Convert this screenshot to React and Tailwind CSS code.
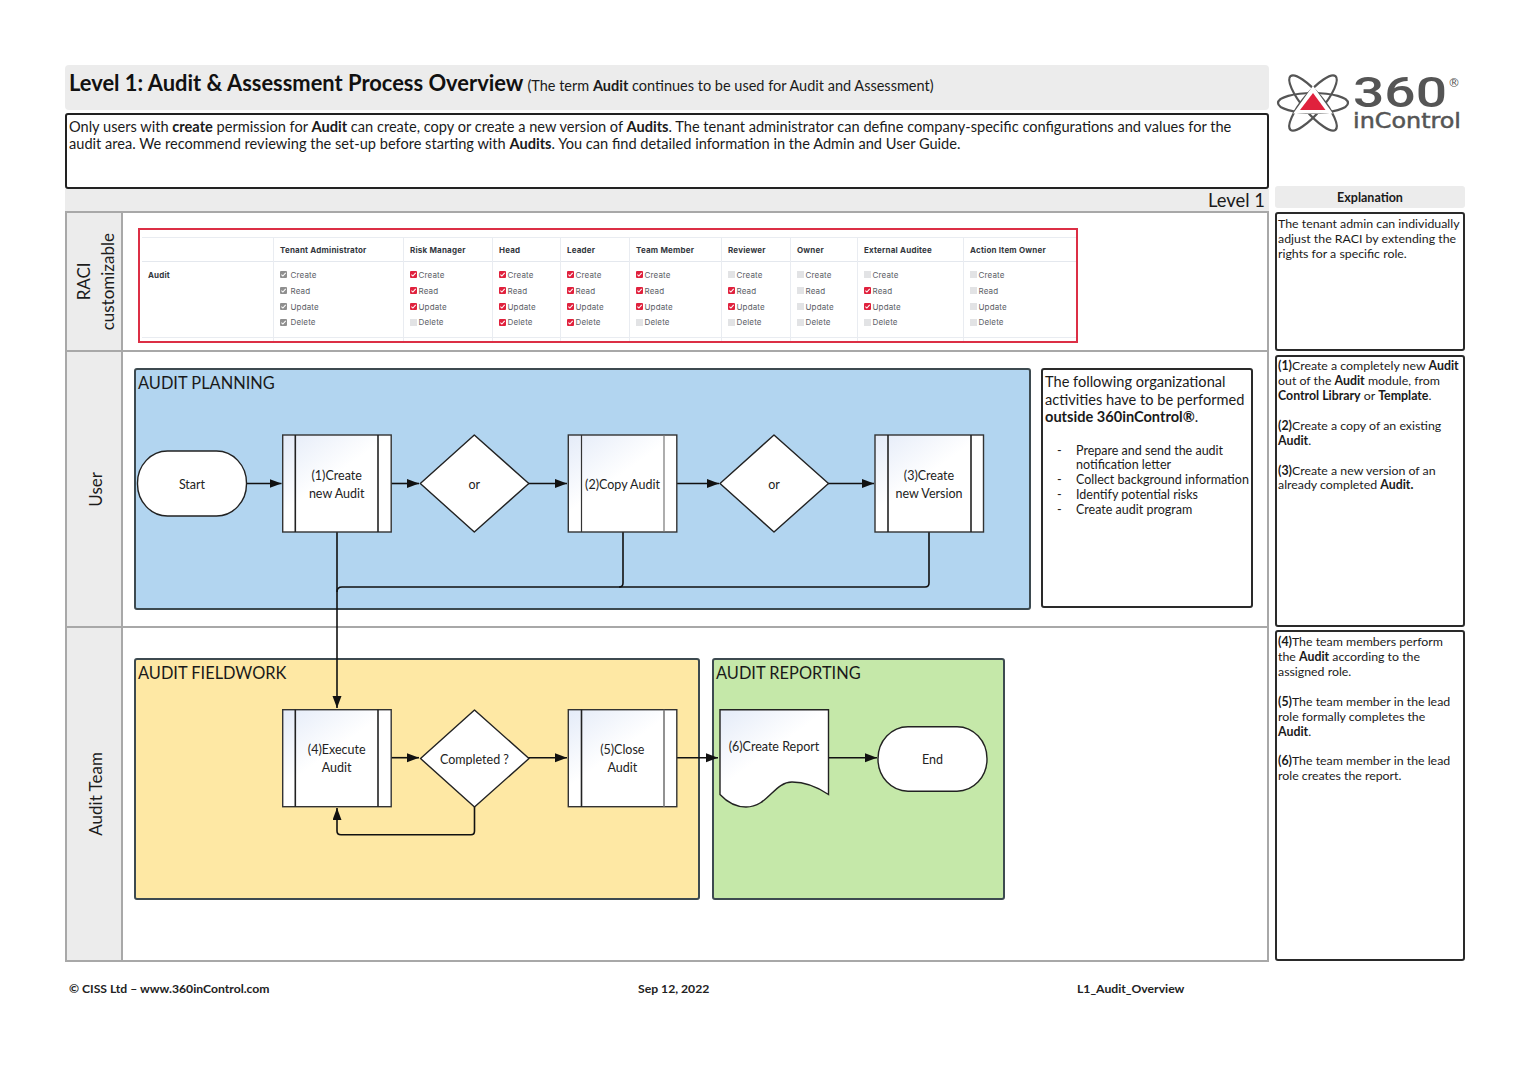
import React from "react";

const roles = [
  { name: "", w: "", cells: null },
  { name: "Tenant Administrator", cells: "gggg", gap: "gap-[3.5px]" },
  { name: "Risk Manager", cells: "rrru" },
  { name: "Head", cells: "rrrr" },
  { name: "Leader", cells: "rrrr" },
  { name: "Team Member", cells: "rrru" },
  { name: "Reviewer", cells: "urru" },
  { name: "Owner", cells: "uuuu" },
  { name: "External Auditee", cells: "urru" },
  { name: "Action Item Owner", cells: "uuuu" },
];
const perms = ["Create", "Read", "Update", "Delete"];

function Box({ kind }) {
  if (kind === "u") return <span className="w-[7px] h-[7px] shrink-0 bg-[#e2e3e5]" />;
  return (
    <span className={`w-[7px] h-[7px] shrink-0 flex items-center justify-center rounded-[1px] ${kind === "r" ? "bg-[#e0213d]" : "bg-[#8f8f8f]"}`}>
      <svg viewBox="0 0 8 8" className="w-[7px] h-[7px]">
        <path d="M1.6 4.2 L3.3 5.8 L6.5 2.2" fill="none" stroke="#fff" strokeWidth="1.2" />
      </svg>
    </span>
  );
}

function RaciTable() {
  return (
    <div className="w-[940px] h-[115px] border-2 border-[#dc2f45] pl-[2px] pt-[7px] bg-white font-['Inter',sans-serif]">
      <div className="grid grid-cols-[131px_130px_89px_68px_69px_92px_69px_67px_106px_113px] h-[104px] border-t border-[#e9ecf1]">
        {roles.map((r, i) => (
          <div key={i} className={`flex flex-col ${i > 0 ? "border-l border-[#e9ecf1]" : ""}`}>
            <div className="h-[24px] border-b border-[#e4e8ee] pl-[6px] flex items-center text-[8px] font-bold tracking-[0.2px] text-[#33373d] whitespace-nowrap">
              {r.name}
            </div>
            <div className="h-[76px] border-b border-[#e9ecf1] pt-[5px] pl-[6px] text-[8px] tracking-[0.15px] text-[#5c6066]">
              {r.cells ? (
                perms.map((p, j) => (
                  <div key={p} className={`h-[15.8px] flex items-center leading-[16px] ${r.gap || "gap-[1.5px]"}`}>
                    <Box kind={r.cells[j]} />
                    <span>{p}</span>
                  </div>
                ))
              ) : (
                <div className="leading-[16px] font-bold text-[#33373d]">Audit</div>
              )}
            </div>
          </div>
        ))}
      </div>
    </div>
  );
}

function Lane({ h, children, label, last }) {
  return (
    <div className={`flex ${h} ${last ? "" : "border-b-2 border-[#a8a8a8]"}`}>
      <div className="w-[56px] shrink-0 bg-[#ececec] border-r-2 border-[#a8a8a8] pl-[4px] flex items-center justify-center">
        <div className="[writing-mode:vertical-rl] rotate-180 text-center text-[17px] leading-[24px] text-[#1c1c1c]">{label}</div>
      </div>
      <div className="flex-1 min-w-0">{children}</div>
    </div>
  );
}

function Panel({ title, color, className }) {
  return (
    <div className={`border-2 border-[#3d4a50] rounded-[3px] pl-[2px] pt-[2px] text-[16.4px] leading-[22px] text-[#1a1a1a] ${color} ${className}`}>
      {title}
    </div>
  );
}

function Proc({ x, y, l, r, lines, rc = "#222" }) {
  return (
    <g>
      <rect x={x} y={y} width="108.5" height="97" fill="url(#proc)" stroke="#333" strokeWidth="1.4" />
      <line x1={l} x2={l} y1={y} y2={y + 97} stroke="#222" strokeWidth="1.6" />
      <line x1={r} x2={r} y1={y} y2={y + 97} stroke={rc} strokeWidth="1.6" />
      {lines.map((t, i) => (
        <text key={t} x={x + 54} y={y + 44.500 + i * 18} textAnchor="middle" fontSize="12.5" fill="#222">{t}</text>
      ))}
    </g>
  );
}

function Diamond({ x, y, label }) {
  const cx = x + 54, cy = y + 48.5;
  return (
    <g>
      <polygon points={`${x},${cy} ${cx},${y} ${x + 108.5},${cy} ${cx},${y + 97}`} fill="#fff" stroke="#222" strokeWidth="1.4" strokeLinejoin="round" />
      <text x={cx} y={cy + 5} textAnchor="middle" fontSize="12.5" fill="#222">{label}</text>
    </g>
  );
}

function Term({ x, y, w = 109, h = 65, label }) {
  return (
    <g>
      <rect x={x} y={y} width={w} height={h} rx="30" ry="32" fill="#fff" stroke="#222" strokeWidth="1.4" />
      <text x={x + w / 2} y={y + h / 2 + 5} textAnchor="middle" fontSize="12.5" fill="#222">{label}</text>
    </g>
  );
}

function Flow() {
  const st = { fill: "none", stroke: "#111", strokeWidth: 1.6 };
  return (
    <svg viewBox="65 211 1204 751" className="absolute inset-0 w-full h-full pointer-events-none font-['Lato',sans-serif]">
      <defs>
        <linearGradient id="proc" x1="0" y1="0" x2="0.6" y2="0.75">
          <stop offset="0" stopColor="#e4ebf8" />
          <stop offset="0.65" stopColor="#ffffff" />
        </linearGradient>
        <marker id="ah" markerUnits="userSpaceOnUse" markerWidth="13" markerHeight="10" refX="12" refY="4.5" orient="auto">
          <path d="M0 0 L12 4.5 L0 9 Z" fill="#111" />
        </marker>
      </defs>

      <path d="M337 532 V708" {...st} markerEnd="url(#ah)" />
      <path d="M337 592 Q337 587 342 587 H925 Q929 587 929 583 V532" {...st} />
      <path d="M623 532 V583 Q623 587 619 587" {...st} />
      <path d="M246.500 483.500 H281.500" {...st} markerEnd="url(#ah)" />
      <path d="M391 483.500 H419" {...st} markerEnd="url(#ah)" />
      <path d="M528 483.500 H567" {...st} markerEnd="url(#ah)" />
      <path d="M677 483.500 H719" {...st} markerEnd="url(#ah)" />
      <path d="M828 483.500 H874" {...st} markerEnd="url(#ah)" />
      <path d="M391 757.700 H419" {...st} markerEnd="url(#ah)" />
      <path d="M528 757.700 H567" {...st} markerEnd="url(#ah)" />
      <path d="M677 757.700 H718" {...st} markerEnd="url(#ah)" />
      <path d="M828.500 757.700 H877" {...st} markerEnd="url(#ah)" />
      <path d="M474.500 807 V831 Q474.500 834.700 471 834.700 H341 Q337 834.700 337 831 V808" {...st} markerEnd="url(#ah)" />

      <Term x={137.500} y={451} label="Start" />
      <Proc x={282.700} y={435} l={295.300} r={378} lines={["(1)Create", "new Audit"]} />
      <Diamond x={420.300} y={435} label="or" />
      <g>
        <rect x="568.300" y="435" width="108.500" height="97" fill="url(#proc)" stroke="#333" strokeWidth="1.4" />
        <line x1="581.500" x2="581.500" y1="435" y2="532" stroke="#333" strokeWidth="1.200" />
        <line x1="664" x2="664" y1="435" y2="532" stroke="#777" strokeWidth="1.200" />
        <text x="622.500" y="488.500" textAnchor="middle" fontSize="12.5" fill="#222">(2)Copy Audit</text>
      </g>
      <Diamond x={720} y={435} label="or" />
      <Proc x={875} y={435} l={888} r={971} lines={["(3)Create", "new Version"]} />

      <Proc x={282.700} y={709.700} l={295.300} r={378} lines={["(4)Execute", "Audit"]} />
      <Diamond x={420.500} y={710} label="Completed ?" />
      <Proc x={568.300} y={709.700} l={581.500} r={664} rc="#777" lines={["(5)Close", "Audit"]} />
      <path d="M720 709.700 H828.500 V794.500 C816 786 805 782 792 782 C774 782 768 807 746 807 C735 807 727 802 720 794.500 Z" fill="url(#proc)" stroke="#222" strokeWidth="1.4" />
      <text x="774" y="751" textAnchor="middle" fontSize="12.5" fill="#222">(6)Create Report</text>
      <Term x={878} y={726.700} h={64.500} label="End" />
    </svg>
  );
}

function Logo() {
  return (
    <svg viewBox="0 0 192 66" className="w-[192px] h-[66px] font-['DejaVu_Sans',sans-serif]">
      <g fill="none" stroke="#555" strokeWidth="2.2">
        <ellipse cx="38" cy="34" rx="35" ry="10" />
        <ellipse cx="38" cy="34" rx="35" ry="10" transform="rotate(50 38 34)" />
        <ellipse cx="38" cy="34" rx="35" ry="10" transform="rotate(-50 38 34)" />
      </g>
      <polygon points="38,21 53,42 23,42" fill="#fff" stroke="#fff" strokeWidth="5" />
      <polygon points="38,24 50.500,41 25,41" fill="#e0213d" />
      <text x="78" y="38" fontSize="42" fontWeight="500" fill="#555" textLength="94" lengthAdjust="spacingAndGlyphs" className="font-['Roboto',sans-serif]">360</text>
      <text x="173" y="18" fontSize="12" fill="#555">®</text>
      <text x="78" y="59" fontSize="21" fill="#555" stroke="#555" strokeWidth="0.5" textLength="108" lengthAdjust="spacingAndGlyphs">inControl</text>
    </svg>
  );
}

const B = ({ children }) => <b className="font-bold">{children}</b>;

export default function App() {
  return (
    <div className="w-[1536px] h-[1086px] bg-white pt-[65px] pl-[65px] flex gap-[6px] font-['Lato',sans-serif] text-[#1a1a1a]">
      <div className="w-[1204px] shrink-0 flex flex-col">
        <div className="h-[45px] bg-[#ececec] rounded-[4px] pl-[4px] pt-[3px] flex items-baseline whitespace-nowrap">
          <span className="text-[21.9px] leading-[30px] font-bold text-[#111]">Level 1: Audit &amp; Assessment Process Overview</span>
          <span className="ml-[4px] text-[14.5px]">(The term <B>Audit</B> continues to be used for Audit and Assessment)</span>
        </div>
        <div className="mt-[3px] h-[76px] border-2 border-[#222] rounded-[3px] px-[2px] pt-[3px] text-[14.6px] leading-[17.400px]">
          Only users with <B>create</B> permission for <B>Audit</B> can create, copy or create a new version of <B>Audits</B>. The tenant administrator can define company-specific configurations and values for the audit area. We recommend reviewing the set-up before starting with <B>Audits</B>. You can find detailed information in the Admin and User Guide.
        </div>
        <div className="h-[22px] bg-[#ececec] text-right pr-[4px] text-[18.4px] leading-[22px]">Level 1</div>

        <div className="relative h-[751px]">
          <div className="h-full border-2 border-[#a8a8a8] flex flex-col">
            <Lane h="h-[139px]" label={<>RACI<br />customizable</>}>
              <div className="pl-[15px] pt-[15px]"><RaciTable /></div>
            </Lane>
            <Lane h="h-[276px]" label="User">
              <div className="pl-[11px] pt-[16px] flex">
                <Panel title="AUDIT PLANNING" color="bg-[#b2d5f0]" className="w-[897px] h-[242px]" />
                <div className="ml-[10px] w-[212px] h-[240px] border-2 border-[#2a2a2a] rounded-[3px] bg-white pl-[2px] pt-[3px]">
                  <p className="text-[14.6px] leading-[17.500px]">The following organizational activities have to be performed <B>outside 360inControl®</B>.</p>
                  <ul className="mt-[18px] text-[12.5px] leading-[14.800px]">
                    {[["Prepare and send the audit", "notification letter"], ["Collect background information"], ["Identify potential risks"], ["Create audit program"]].map((it) => (
                      <li key={it[0]} className="flex whitespace-nowrap">
                        <span className="ml-[12px] w-[19px] shrink-0">-</span>
                        <span>{it[0]}{it[1] && <><br />{it[1]}</>}</span>
                      </li>
                    ))}
                  </ul>
                </div>
              </div>
            </Lane>
            <Lane h="flex-1" label="Audit Team" last>
              <div className="pl-[11px] pt-[30px] flex gap-[12px]">
                <Panel title="AUDIT FIELDWORK" color="bg-[#fee8a4]" className="w-[566px] h-[242px]" />
                <Panel title="AUDIT REPORTING" color="bg-[#c5e8a9]" className="w-[293px] h-[242px]" />
              </div>
            </Lane>
          </div>
          <Flow />
        </div>

        <div className="mt-[19px] pl-[4px] grid grid-cols-[569px_439px_1fr] text-[12.2px] leading-[16px] font-bold text-[#222]">
          <span>© CISS Ltd – www.360inControl.com</span>
          <span>Sep 12, 2022</span>
          <span>L1_Audit_Overview</span>
        </div>
      </div>

      <div className="w-[190px] shrink-0 flex flex-col text-[12.35px] leading-[14.900px]">
        <div className="h-[121px] pt-[4px]"><Logo /></div>
        <div className="h-[22px] bg-[#ececec] rounded-[3px] text-center text-[12.500px] leading-[23px] font-bold">Explanation</div>
        <div className="mt-[4px] h-[139px] border-2 border-[#2a2a2a] rounded-[3px] pl-[1px] pt-[3px]">
          The tenant admin can individually adjust the RACI by extending the rights for a specific role.
        </div>
        <div className="mt-[4px] h-[272px] border-2 border-[#2a2a2a] rounded-[3px] pl-[1px] pt-[2px]">
          <p><B>(1)</B>Create a completely new <B>Audit</B> out of the <B>Audit</B> module, from <B>Control Library</B> or <B>Template</B>.</p>
          <p className="mt-[15px]"><B>(2)</B>Create a copy of an existing <B>Audit</B>.</p>
          <p className="mt-[15px]"><B>(3)</B>Create a new version of an already completed <B>Audit.</B></p>
        </div>
        <div className="mt-[3px] h-[331px] border-2 border-[#2a2a2a] rounded-[3px] pl-[1px] pt-[3px]">
          <p><B>(4)</B>The team members perform the <B>Audit</B> according to the assigned role.</p>
          <p className="mt-[15px]"><B>(5)</B>The team member in the lead role formally completes the<br /><B>Audit</B>.</p>
          <p className="mt-[15px]"><B>(6)</B>The team member in the lead role creates the report.</p>
        </div>
      </div>
    </div>
  );
}
